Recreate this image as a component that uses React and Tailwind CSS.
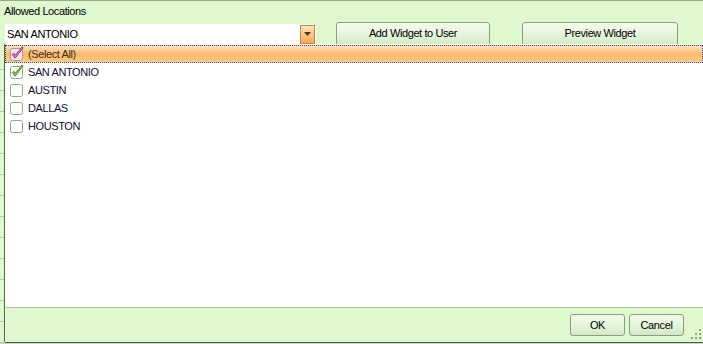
import React from 'react';

const items = [
  { label: 'SAN ANTONIO', checked: true },
  { label: 'AUSTIN', checked: false },
  { label: 'DALLAS', checked: false },
  { label: 'HOUSTON', checked: false },
];

const CheckBox = ({ checked, tone = 'green' }) => {
  const stroke = tone === 'pink' ? '#9a2a7a' : '#3f8a22';
  const fill = tone === 'pink' ? '#e47ccc' : '#7cd04c';
  return (
    <svg width="14" height="14" viewBox="0 0 14 14" className="shrink-0 overflow-visible">
      <rect x="0.5" y="1.5" width="12" height="12" rx="2" fill={tone === 'pink' ? '#f6e2ee' : '#ffffff'} stroke="#8fa682" />
      {checked && (
        <path
          d="M2.2 7.6 L5.2 11.2 L13.2 0.8 L11.9 0 L5.2 8.4 L3.6 6.2 Z"
          fill={fill}
          stroke={stroke}
          strokeWidth="0.9"
          strokeLinejoin="round"
        />
      )}
    </svg>
  );
};

const FormButton = ({ children, className }) => (
  <div
    className={`h-[24px] rounded-t-[3px] border border-[#8b9c80] bg-gradient-to-b from-[#f3fcec] via-[#e6f5dc] to-[#d3e8c6] flex items-start justify-center pt-[4px] text-[11px] leading-[13px] text-black ${className}`}
  >
    {children}
  </div>
);

const FooterButton = ({ children }) => (
  <div className="w-[55px] h-[22px] rounded-[3px] border border-[#8b9c80] bg-gradient-to-b from-[#f3fcec] via-[#e6f5dc] to-[#d3e8c6] flex items-center justify-center text-[11px] text-black">
    {children}
  </div>
);

export default function App() {
  return (
    <div className="relative w-[703px] h-[344px] overflow-hidden bg-[#dff8cf] font-['Liberation_Sans',Arial,sans-serif] tracking-[-0.4px]">
      {/* form header */}
      <div className="h-[1px] bg-[#97ad88]" />
      <div className="pl-[4px] pt-[4px] text-[11px] leading-[13px] text-black">Allowed Locations</div>
      <div className="flex items-start mt-[5px] h-[26px]">
        <div className="ml-[5px] mt-[1px] w-[311px] h-[20px] bg-white flex items-center">
          <span className="pl-[2px] flex-1 text-[11px] text-black">SAN ANTONIO</span>
          <div className="w-[15px] h-[19px] mr-[1px] border border-[#c08a4c] bg-gradient-to-b from-[#fde6c0] via-[#f9c486] to-[#f6a852] flex items-center justify-center">
            <svg width="7" height="4" viewBox="0 0 7 4">
              <path d="M0 0 H7 L3.5 4 Z" fill="#4a3520" />
            </svg>
          </div>
        </div>
        <FormButton className="ml-[20px] w-[154px] -mt-[1px]">Add Widget to User</FormButton>
        <FormButton className="ml-[32px] w-[156px] -mt-[1px]">Preview Widget</FormButton>
      </div>

      {/* underlying grid showing at the edge */}
      <div className="w-[4px] flex flex-col">
        {Array.from({ length: 14 }).map((_, i) => (
          <div key={i} className="h-[21px] border-b border-[#b4caa6]" />
        ))}
      </div>

      {/* popup */}
      <div className="absolute left-[4px] top-[44px] w-[700px] h-[298px] flex flex-col border-l border-[#4c6e3c] shadow-[1px_1px_0_#555]">
        <div className="flex-1 bg-white pt-[1px]">
          <div className="h-[18px] mr-[1px] border border-dotted border-[#3c4d80] bg-gradient-to-b from-[#fde2c2] via-[#f8b86e] to-[#fbcb8a] flex items-center pl-[4px] gap-[4px]">
            <CheckBox checked tone="pink" />
            <span className="text-[11px] text-[#4a2c10]">(Select All)</span>
          </div>
          {items.map((it) => (
            <div key={it.label} className="h-[18px] flex items-center pl-[5px] gap-[4px]">
              <CheckBox checked={it.checked} />
              <span className="text-[11px] text-[#101030]">{it.label}</span>
            </div>
          ))}
        </div>
        <div className="h-[35px] border-t border-[#a3bb94] bg-[#dff8cf] border-l border-l-white flex items-start justify-end pt-[6px] pr-[20px] gap-[4px] relative">
          <FooterButton>OK</FooterButton>
          <FooterButton>Cancel</FooterButton>
          <svg width="10" height="10" viewBox="0 0 10 10" className="absolute right-[3px] bottom-[3px]">
            <g fill="#8ea67e">
              <rect x="8" y="0" width="2" height="2" />
              <rect x="4" y="4" width="2" height="2" />
              <rect x="8" y="4" width="2" height="2" />
              <rect x="0" y="8" width="2" height="2" />
              <rect x="4" y="8" width="2" height="2" />
              <rect x="8" y="8" width="2" height="2" />
            </g>
          </svg>
        </div>
      </div>

      {/* bottom edge of page beneath the popup */}
      <div className="absolute left-0 right-0 bottom-0 h-[1px] bg-[#c8d8bc]" />
    </div>
  );
}
